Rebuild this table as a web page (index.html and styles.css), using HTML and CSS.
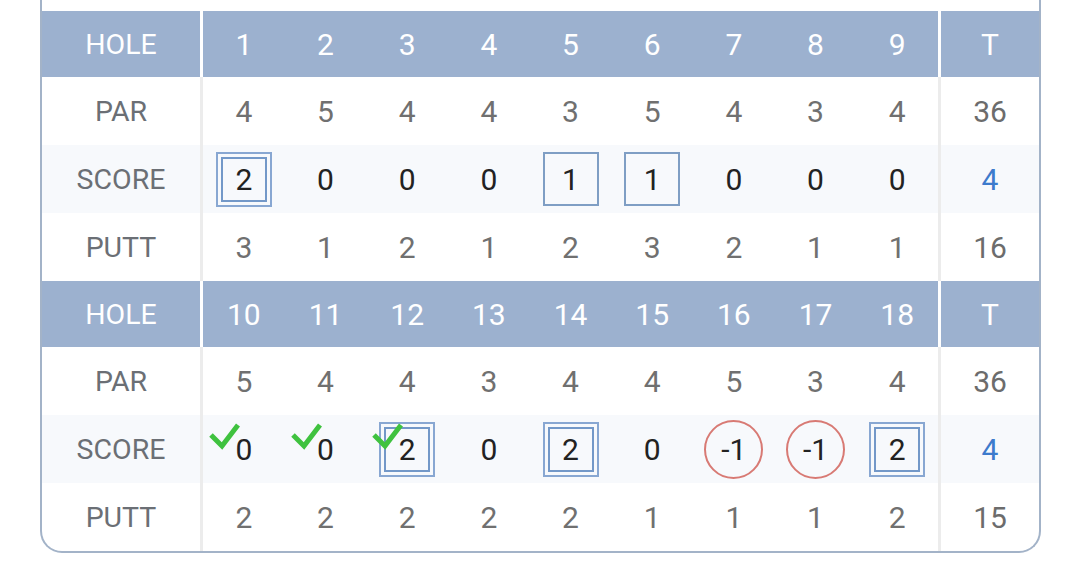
FILE: index.html
```html
<!doctype html>
<html lang="en">
<head>
  <meta charset="utf-8">
  <title>Scorecard</title>
  <meta name="viewport" content="width=device-width, initial-scale=1">
  <link rel="stylesheet" href="styles.css">
</head>
<body>
  <div class="card">
    <!-- front nine -->
    <div class="row row--head">
      <div class="cell lab">HOLE</div>
      <div class="cell">1</div><div class="cell">2</div><div class="cell">3</div>
      <div class="cell">4</div><div class="cell">5</div><div class="cell">6</div>
      <div class="cell">7</div><div class="cell">8</div><div class="cell">9</div>
      <div class="cell tot">T</div>
    </div>
    <div class="row">
      <div class="cell lab">PAR</div>
      <div class="cell">4</div><div class="cell">5</div><div class="cell">4</div>
      <div class="cell">4</div><div class="cell">3</div><div class="cell">5</div>
      <div class="cell">4</div><div class="cell">3</div><div class="cell">4</div>
      <div class="cell tot">36</div>
    </div>
    <div class="row row--score">
      <div class="cell lab">SCORE</div>
      <div class="cell"><span class="dbl"><span class="dbl__in">2</span></span></div>
      <div class="cell">0</div><div class="cell">0</div><div class="cell">0</div>
      <div class="cell"><span class="box">1</span></div>
      <div class="cell"><span class="box">1</span></div>
      <div class="cell">0</div><div class="cell">0</div><div class="cell">0</div>
      <div class="cell tot total">4</div>
    </div>
    <div class="row">
      <div class="cell lab">PUTT</div>
      <div class="cell">3</div><div class="cell">1</div><div class="cell">2</div>
      <div class="cell">1</div><div class="cell">2</div><div class="cell">3</div>
      <div class="cell">2</div><div class="cell">1</div><div class="cell">1</div>
      <div class="cell tot">16</div>
    </div>

    <!-- back nine -->
    <div class="row row--head">
      <div class="cell lab">HOLE</div>
      <div class="cell">10</div><div class="cell">11</div><div class="cell">12</div>
      <div class="cell">13</div><div class="cell">14</div><div class="cell">15</div>
      <div class="cell">16</div><div class="cell">17</div><div class="cell">18</div>
      <div class="cell tot">T</div>
    </div>
    <div class="row">
      <div class="cell lab">PAR</div>
      <div class="cell">5</div><div class="cell">4</div><div class="cell">4</div>
      <div class="cell">3</div><div class="cell">4</div><div class="cell">4</div>
      <div class="cell">5</div><div class="cell">3</div><div class="cell">4</div>
      <div class="cell tot">36</div>
    </div>
    <div class="row row--score">
      <div class="cell lab">SCORE</div>
      <div class="cell">
        <svg class="check" viewBox="0 0 32 28"><path d="M3 13 L14 24 L30 3"/></svg>0
      </div>
      <div class="cell">
        <svg class="check" viewBox="0 0 32 28"><path d="M3 13 L14 24 L30 3"/></svg>0
      </div>
      <div class="cell">
        <span class="dbl"><span class="dbl__in">2</span></span>
        <svg class="check" viewBox="0 0 32 28"><path d="M3 13 L14 24 L30 3"/></svg>
      </div>
      <div class="cell">0</div>
      <div class="cell"><span class="dbl"><span class="dbl__in">2</span></span></div>
      <div class="cell">0</div>
      <div class="cell"><span class="circ">-1</span></div>
      <div class="cell"><span class="circ">-1</span></div>
      <div class="cell"><span class="dbl"><span class="dbl__in">2</span></span></div>
      <div class="cell tot total">4</div>
    </div>
    <div class="row">
      <div class="cell lab">PUTT</div>
      <div class="cell">2</div><div class="cell">2</div><div class="cell">2</div>
      <div class="cell">2</div><div class="cell">2</div><div class="cell">1</div>
      <div class="cell">1</div><div class="cell">1</div><div class="cell">2</div>
      <div class="cell tot">15</div>
    </div>
  </div>
</body>
</html>
```

FILE: styles.css
```css
html {
  background-color: #fff;
}

body {
  margin: 0;
  padding: 0 38px 0 40px;
  font-family: Roboto, "Noto Sans", sans-serif;
}

.card {
  border: 2px solid #a3b3c8;
  border-top: none;
  border-radius: 0 0 22px 22px;
  padding-top: 11px;
  overflow: hidden;
}

.row {
  display: flex;
  height: 68px;
  color: #707070;
  font-size: 30px;
}

.row--head {
  height: 66px;
  background-color: #9cb1cf;
  color: #fff;
}

.row--score {
  background-color: #f7f9fc;
  color: #222;
}

.cell {
  flex: 1;
  position: relative;
  display: flex;
  align-items: center;
  justify-content: center;
}

.lab {
  flex: 0 0 161px;
  box-sizing: border-box;
  border-right: 3px solid #ececec;
  font-size: 28.5px;
  color: #6b6f75;
}

.tot {
  flex: 0 0 101px;
  box-sizing: border-box;
  border-left: 3px solid #ececec;
  color: #6c6c6c;
}

.row--head .lab,
.row--head .tot {
  border-color: #fff;
  color: #fff;
}

.total {
  color: #3d7bcc;
}

.box {
  width: 56px;
  height: 54px;
  box-sizing: border-box;
  border: 2px solid #7f9ec4;
  display: flex;
  align-items: center;
  justify-content: center;
}

.dbl {
  width: 56px;
  height: 55px;
  box-sizing: border-box;
  border: 2px solid #88a7d2;
  padding: 3px;
  display: flex;
}

.dbl__in {
  flex: 1;
  border: 2px solid #7398c8;
  display: flex;
  align-items: center;
  justify-content: center;
}

.circ {
  width: 59px;
  height: 59px;
  box-sizing: border-box;
  border: 2px solid #d87a74;
  border-radius: 50%;
  display: flex;
  align-items: center;
  justify-content: center;
}

.check {
  position: absolute;
  left: 5px;
  top: 7px;
  width: 32px;
  height: 28px;
}

.check path {
  fill: none;
  stroke: #3fc23f;
  stroke-width: 5;
}
```
